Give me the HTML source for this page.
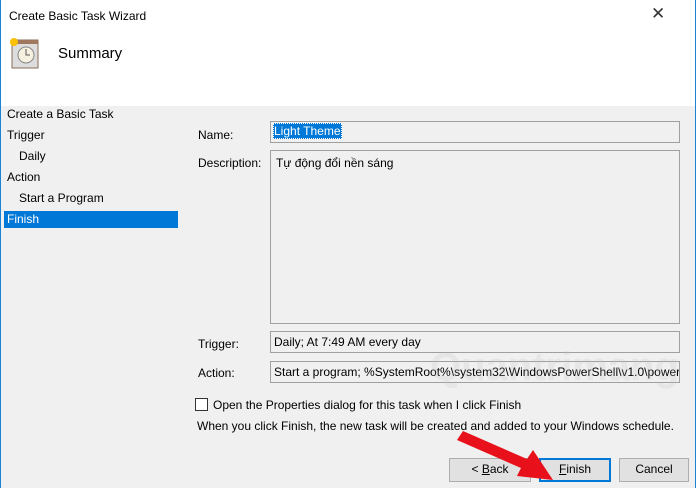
<!DOCTYPE html><html><head><style>
body{margin:0;width:696px;height:488px;overflow:hidden;font-family:"Liberation Sans",sans-serif;font-size:12px;color:#000;position:relative;background:#f0f0f0}
div{position:absolute;box-sizing:border-box}
.box{background:#f0f0f0;border:1px solid #a0a0a0;padding:3px 3px;white-space:nowrap;overflow:hidden}
.btn{background:#e1e1e1;border:1px solid #adadad;text-align:center;line-height:21px}
.l{left:7px}
</style></head><body>
<div style="left:0;top:0;width:696px;height:106px;background:#fff"></div>
<div style="left:0;top:0;width:1px;height:488px;background:#1883d7"></div>
<div style="right:0;top:0;width:1px;height:488px;background:#1883d7"></div>
<div style="left:9px;top:9px">Create Basic Task Wizard</div>
<div style="left:651px;top:4px;font-size:17px;color:#333">✕</div>
<svg style="position:absolute;left:8px;top:36px" width="32" height="34"><rect x="4" y="4" width="26" height="28" fill="#ddd" stroke="#8a6d5a"/><rect x="4" y="4" width="26" height="4" fill="#a07860"/><circle cx="18" cy="19" r="8" fill="#f5f0e0" stroke="#888"/><path d="M18 13v6h4" stroke="#555" fill="none"/><circle cx="6" cy="6" r="4" fill="#f8c000"/></svg>
<div style="left:58px;top:45px;font-size:15px">Summary</div>
<div class="l" style="top:107px">Create a Basic Task</div>
<div class="l" style="top:128px">Trigger</div>
<div style="left:19px;top:149px">Daily</div>
<div class="l" style="top:170px">Action</div>
<div style="left:19px;top:191px">Start a Program</div>
<div style="left:4px;top:211px;width:174px;height:17px;background:#0078d7;color:#fff;padding:1px 3px">Finish</div>
<div style="left:198px;top:128px">Name:</div>
<div class="box" style="left:270px;top:121px;width:410px;height:22px;padding:2px"><span style="background:#0078d7;color:#fff;border:1px dotted #fff">Light Theme</span></div>
<div style="left:198px;top:156px">Description:</div>
<div class="box" style="left:270px;top:150px;width:410px;height:174px;padding:5px">Tự động đổi nền sáng</div>
<div style="left:198px;top:337px">Trigger:</div>
<div class="box" style="left:270px;top:331px;width:410px;height:22px">Daily; At 7:49 AM every day</div>
<div style="left:198px;top:366px">Action:</div>
<div class="box" style="left:270px;top:361px;width:410px;height:22px">Start a program; %SystemRoot%\system32\WindowsPowerShell\v1.0\powershell.exe</div>
<div style="left:195px;top:398px;width:13px;height:13px;border:1px solid #333;background:#fff"></div>
<div style="left:213px;top:398px">Open the Properties dialog for this task when I click Finish</div>
<div style="left:197px;top:419px">When you click Finish, the new task will be created and added to your Windows schedule.</div>
<div style="left:430px;top:345px;font-size:40px;color:rgba(190,190,190,.2);font-weight:bold">Quantrimang</div>
<div class="btn" style="left:449px;top:458px;width:82px;height:24px">&lt; <u>B</u>ack</div>
<div class="btn" style="left:539px;top:458px;width:72px;height:24px;border:2px solid #0078d7;line-height:19px"><u>F</u>inish</div>
<div class="btn" style="left:619px;top:458px;width:70px;height:24px">Cancel</div>
<svg style="position:absolute;left:455px;top:430px" width="110" height="58"><path d="M2 10 L66 38 L62 46 L98 50 L78 20 L72 29 L8 1Z" fill="#e8101a"/></svg>
</body></html>
